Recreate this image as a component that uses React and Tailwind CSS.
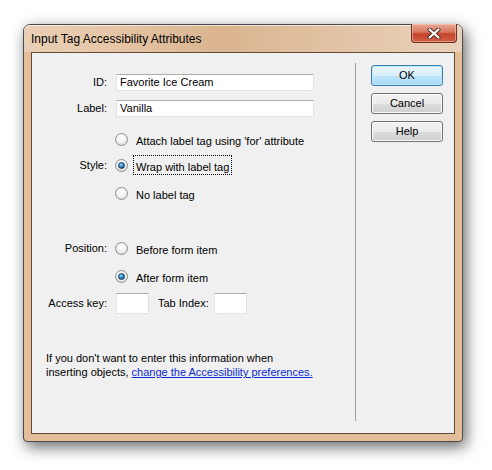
const body = "font-['Liberation_Sans',Arial,sans-serif] text-[11px] text-black";

function Radio({ checked }) {
  return (
    <span className="flex h-[13px] w-[13px] shrink-0 items-center justify-center rounded-full border border-[#8e8f8f] bg-[radial-gradient(circle_at_50%_35%,#ffffff_0%,#f3f3f3_45%,#cfcfcf_100%)]">
      {checked && (
        <span className="h-[7px] w-[7px] rounded-full border border-[#173f63] bg-[radial-gradient(circle_at_40%_35%,#aee0fb_0%,#2d8ad0_45%,#0c3a66_100%)]" />
      )}
    </span>
  );
}

function Row({ label, className = "", children }) {
  return (
    <div className={`flex items-center ${className}`}>
      <div className="w-[75px] shrink-0 text-right">{label}</div>
      <div className="ml-[9px] flex items-center">{children}</div>
    </div>
  );
}

// option text sits a few pixels below the radio's centre line
function RadioRow({ label, text, checked, focused, className = "" }) {
  return (
    <Row label={label} className={`h-[20px] ${className}`}>
      <span className="-ml-px">
        <Radio checked={checked} />
      </span>
      {focused ? (
        <span className="ml-[5px] flex h-[20px] items-center border border-dotted border-black px-[2px] pt-[5px]">{text}</span>
      ) : (
        <span className="ml-[8px] pt-[5px]">{text}</span>
      )}
    </Row>
  );
}

function TextBox({ value, className = "" }) {
  return (
    <div
      className={`flex items-center border border-[#e2e3ea] border-t-[#abadb3] bg-white pl-[3px] ${className}`}
    >
      {value}
    </div>
  );
}

function Button({ children, primary }) {
  return (
    <button
      className={`flex h-[21px] w-[72px] items-center justify-center rounded-[3px] border ${
        primary
          ? "border-[#3c7fb1] bg-[linear-gradient(#eaf6fd_0%,#d9f0fc_50%,#bee6fd_51%,#a7d9f5_100%)] shadow-[inset_0_0_0_1px_#bfe7fc]"
          : "border-[#707070] bg-[linear-gradient(#f2f2f2_0%,#ebebeb_50%,#dddddd_51%,#cfcfcf_100%)] shadow-[inset_0_0_0_1px_#fcfcfc]"
      }`}
    >
      {children}
    </button>
  );
}

function CloseButton() {
  return (
    <div className="-mt-px flex h-[19px] w-[46px] items-center justify-center rounded-b-[4px] border border-t-0 border-[#6b2f24] bg-[linear-gradient(#e9a893_0%,#d8775e_45%,#c5432b_55%,#d25f45_100%)] shadow-[inset_0_0_0_1px_rgba(255,220,210,0.45)]">
      <svg width="14" height="11" viewBox="0 0 14 11">
        <path d="M2.5 1.5 L11.5 9.5 M11.5 1.5 L2.5 9.5" stroke="#4a2a24" strokeWidth="4" strokeLinecap="round" />
        <path d="M2.5 1.5 L11.5 9.5 M11.5 1.5 L2.5 9.5" stroke="#ffffff" strokeWidth="2.2" strokeLinecap="round" />
      </svg>
    </div>
  );
}

export default function App() {
  return (
    <div className="h-[470px] w-[492px] overflow-hidden bg-white pl-[23px] pt-[24px]">
      <div className="flex h-[418px] w-[440px] flex-col rounded-t-[7px] rounded-b-[4px] border border-[#4b4b4b] bg-[#e3be99] shadow-[3px_5px_15px_rgba(0,0,0,0.6)]">
        {/* title bar */}
        <div className="flex h-[27px] shrink-0 items-start justify-between rounded-t-[6px] bg-[linear-gradient(90deg,#e9cfb5_0%,#e6c6a6_20%,#dab490_45%,#e2c2a3_70%,#e9d2bb_100%)] pl-[7px] pr-[5px] shadow-[inset_0_1px_0_rgba(255,255,255,0.6)]">
          <span className="mt-[5px] font-['Liberation_Sans',Arial,sans-serif] text-[12px] text-black">
            Input Tag Accessibility Attributes
          </span>
          <CloseButton />
        </div>

        {/* client area */}
        <div className={`mx-[7px] flex h-[382px] border border-[#5f4c3f] bg-[#f0f0f0] ${body}`}>
          <div className="flex w-[323px] flex-col">
            <Row label="ID:" className="mt-[21px]">
              <TextBox value="Favorite Ice Cream" className="h-[17px] w-[198px]" />
            </Row>
            <Row label="Label:" className="mt-[9px]">
              <TextBox value="Vanilla" className="h-[17px] w-[198px]" />
            </Row>

            <RadioRow text="Attach label tag using 'for' attribute" className="mt-[12px]" />
            <RadioRow label="Style:" text="Wrap with label tag" checked focused className="mt-[6px]" />
            <RadioRow text="No label tag" className="mt-[8px]" />

            <RadioRow label="Position:" text="Before form item" className="mt-[35px]" />
            <RadioRow text="After form item" checked className="mt-[8px]" />

            <Row label="Access key:" className="mt-[7px]">
              <TextBox className="h-[21px] w-[33px]" />
              <span className="ml-[9px]">Tab Index:</span>
              <TextBox className="ml-[5px] h-[21px] w-[33px]" />
            </Row>

            <p className="ml-[14px] mt-[37px] leading-[14px]">
              If you don't want to enter this information when
              <br />
              inserting objects,{" "}
              <a href="#" className="text-[#0a2bd8] underline">
                change the Accessibility preferences.
              </a>
            </p>
          </div>

          <div className="mb-[12px] mt-[10px] w-px bg-[#a0a0a0]" />

          <div className="flex flex-col gap-[7px] pl-[15px] pt-[12px]">
            <Button primary>OK</Button>
            <Button>Cancel</Button>
            <Button>Help</Button>
          </div>
        </div>
      </div>
    </div>
  );
}
